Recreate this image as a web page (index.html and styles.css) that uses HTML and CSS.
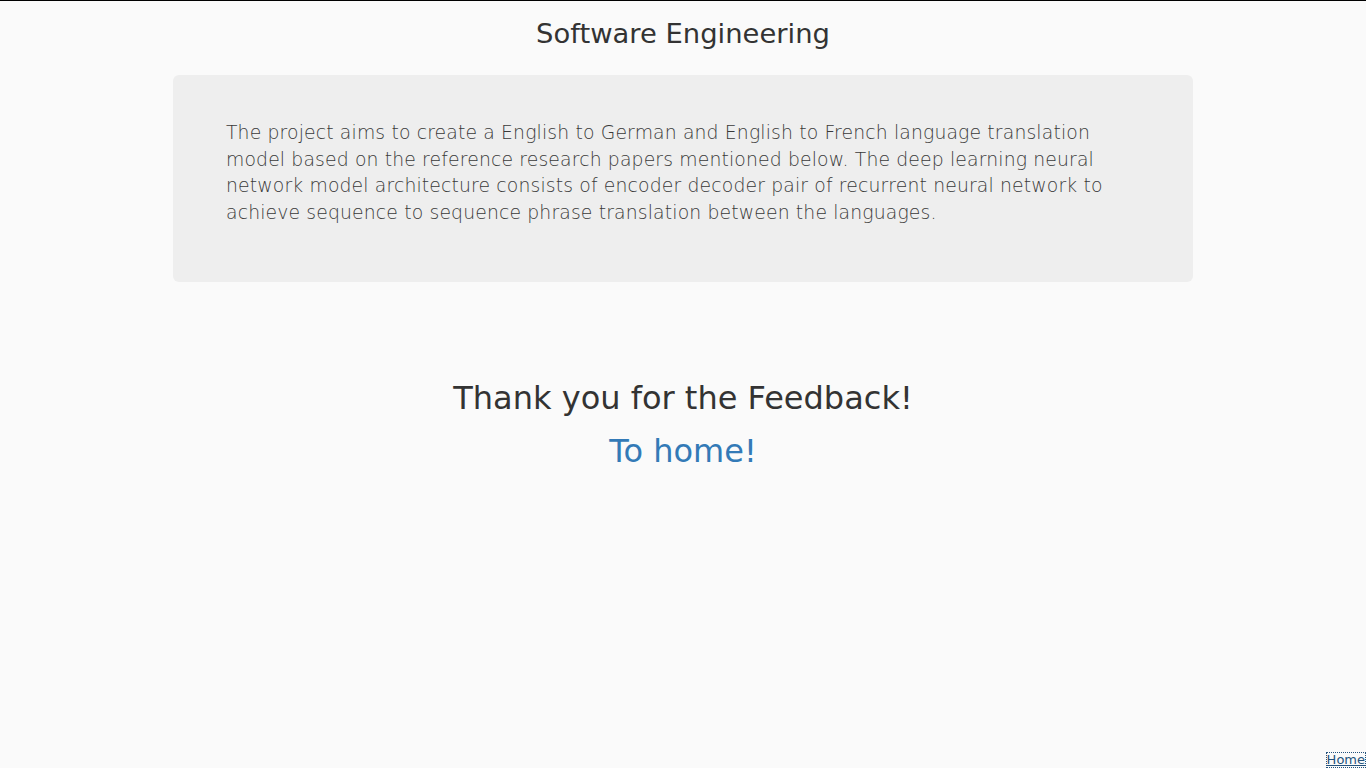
FILE: index.html
```html
<!DOCTYPE html>
<html>
<head>
<meta charset="utf-8">
<link rel="stylesheet" href="styles.css">
</head>
<body>
<div class="page">
  <h2 class="title">Software Engineering</h2>
  <div class="jumbotron">
    <p>The project aims to create a English to German and English to French language translation model based on the reference research papers mentioned below. The deep learning neural network model architecture consists of encoder decoder pair of recurrent neural network to achieve sequence to sequence phrase translation between the languages.</p>
  </div>
  <div class="thanks">
    <h1>Thank you for the Feedback!</h1>
    <h1 class="home-big"><a href="#">To home!</a></h1>
  </div>
</div>
<div class="footer"><a class="home-link" href="#">Home</a></div>
</body>
</html>
```

FILE: styles.css
```css
html, body {
  margin: 0;
  padding: 0;
  height: 100%;
}
body {
  background: #fafafa;
  border-top: 1px solid #000;
  box-sizing: border-box;
  font-family: "DejaVu Sans", sans-serif;
  color: #333;
  display: flex;
  flex-direction: column;
}
.page {
  flex: 1;
  display: flex;
  flex-direction: column;
  align-items: center;
}
.title {
  font-size: 27.4px;
  font-weight: normal;
  margin: 17px 0 0;
  line-height: 32px;
  color: #333;
}
.jumbotron {
  width: 1020px;
  box-sizing: border-box;
  margin-top: 25px;
  background: #eee;
  border-radius: 6px;
  padding: 45px 53px 43px;
}
.jumbotron p {
  margin: 0 0 13px;
  font-size: 18.8px;
  font-weight: 200;
  letter-spacing: 0.15px;
  line-height: 26.6px;
  color: #3a3a3a;
}
.thanks {
  margin-top: 96px;
  text-align: center;
}
.thanks h1 {
  font-size: 32px;
  font-weight: normal;
  margin: 0;
  line-height: 40px;
}
.home-big {
  margin-top: 13px !important;
}
.home-big a {
  color: #337ab7;
  text-decoration: none;
}
.footer {
  display: flex;
  justify-content: flex-end;
  padding: 0 1px 1px 0;
}
.home-link {
  font-size: 13px;
  color: #23527c;
  outline: 1px dotted #23527c;
  line-height: 14px;
}
```
